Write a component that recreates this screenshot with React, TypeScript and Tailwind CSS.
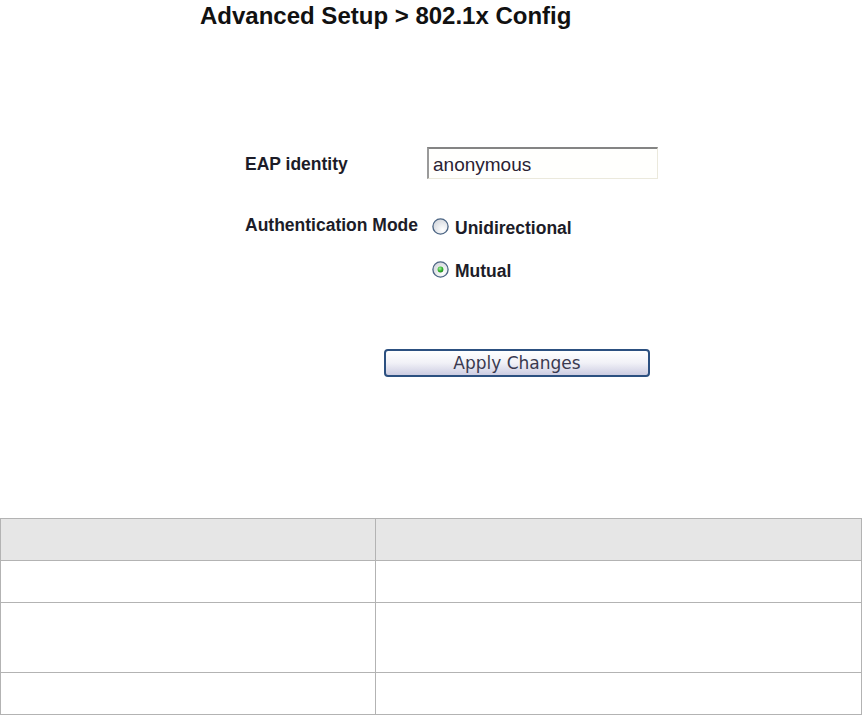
import React from 'react'

const SANS = 'font-["Liberation_Sans",Arial,sans-serif]'

function Radio({ checked }: { checked?: boolean }) {
  return (
    <svg width="17" height="17" viewBox="0 0 17 17" className="shrink-0">
      <defs>
        <radialGradient id={checked ? 'rg-on' : 'rg-off'} cx="0.65" cy="0.7" r="0.8">
          <stop offset="0" stopColor="#ffffff" />
          <stop offset="1" stopColor="#d0d4da" />
        </radialGradient>
        <radialGradient id="dot" cx="0.4" cy="0.35" r="0.7">
          <stop offset="0" stopColor="#a6f0a0" />
          <stop offset="0.6" stopColor="#35b52f" />
          <stop offset="1" stopColor="#1f7f1c" />
        </radialGradient>
      </defs>
      <circle cx="8.5" cy="8.5" r="7.6" fill={`url(#${checked ? 'rg-on' : 'rg-off'})`} stroke="#4b6483" strokeWidth="1.3" />
      {checked && <circle cx="8.5" cy="8.5" r="2.9" fill="url(#dot)" />}
    </svg>
  )
}

function RadioOption({ label, checked }: { label: string; checked?: boolean }) {
  return (
    <div className="flex items-start h-[24px]">
      <div className="mt-[4px] ml-[5px]">
        <Radio checked={checked} />
      </div>
      <span className="mt-[4px] ml-[6px] text-[17.5px] leading-[20px] font-bold text-[#1c1c28]">{label}</span>
    </div>
  )
}

export default function App() {
  const rows = [41, 41, 69, 41]

  return (
    <div className={`w-[862px] h-[715px] bg-white overflow-hidden ${SANS}`}>
      {/* Title */}
      <div className="h-[30px] pt-[2px] pl-[200px]">
        <h1 className="text-[24px] leading-[28px] font-bold text-[#111]">Advanced Setup &gt; 802.1x Config</h1>
      </div>

      {/* Form */}
      <div className="mt-[117px] pl-[245px]">
        <div className="flex items-start h-[32px]">
          <div className="w-[182px] pt-[7px] text-[17.5px] leading-[20px] font-bold text-[#1c1c28]">EAP identity</div>
          <input
            defaultValue="anonymous"
            className={`w-[231px] h-[32px] pl-[4px] pt-[3px] bg-[#fffffd] text-[19px] text-[#2a2233] outline-none border-t-2 border-l-2 border-r border-b border-t-[#848484] border-l-[#9a9a9a] border-r-[#ebe9dc] border-b-[#ebe9dc] ${SANS}`}
          />
        </div>

        <div className="flex items-start mt-[35px]">
          <div className="w-[182px] mt-[1px] text-[17.5px] leading-[20px] font-bold text-[#1c1c28]">Authentication Mode</div>
          <div className="flex flex-col gap-[19px]">
            <RadioOption label="Unidirectional" />
            <RadioOption label="Mutual" checked />
          </div>
        </div>
      </div>

      {/* Button */}
      <div className="mt-[68px] pl-[384px]">
        <button className='w-[266px] h-[28px] rounded-[4px] border-2 border-[#2c5080] bg-gradient-to-b from-white via-[#f1f1f7] to-[#cdcde2] text-[17px] leading-[20px] text-[#3a3a50] font-["DejaVu_Sans",Verdana,sans-serif]'>
          Apply Changes
        </button>
      </div>

      {/* Table */}
      <div className="mt-[141px] w-[862px] border-l border-t border-[#b3b3b3]">
        {rows.map((h, i) => (
          <div key={i} className={`flex ${i === 0 ? 'bg-[#e6e6e6]' : 'bg-white'}`}>
            <div className="w-[375px] border-r border-b border-[#b3b3b3]" style={{ height: h + 1 }} />
            <div className="w-[486px] border-r border-b border-[#b3b3b3]" style={{ height: h + 1 }} />
          </div>
        ))}
      </div>
    </div>
  )
}
